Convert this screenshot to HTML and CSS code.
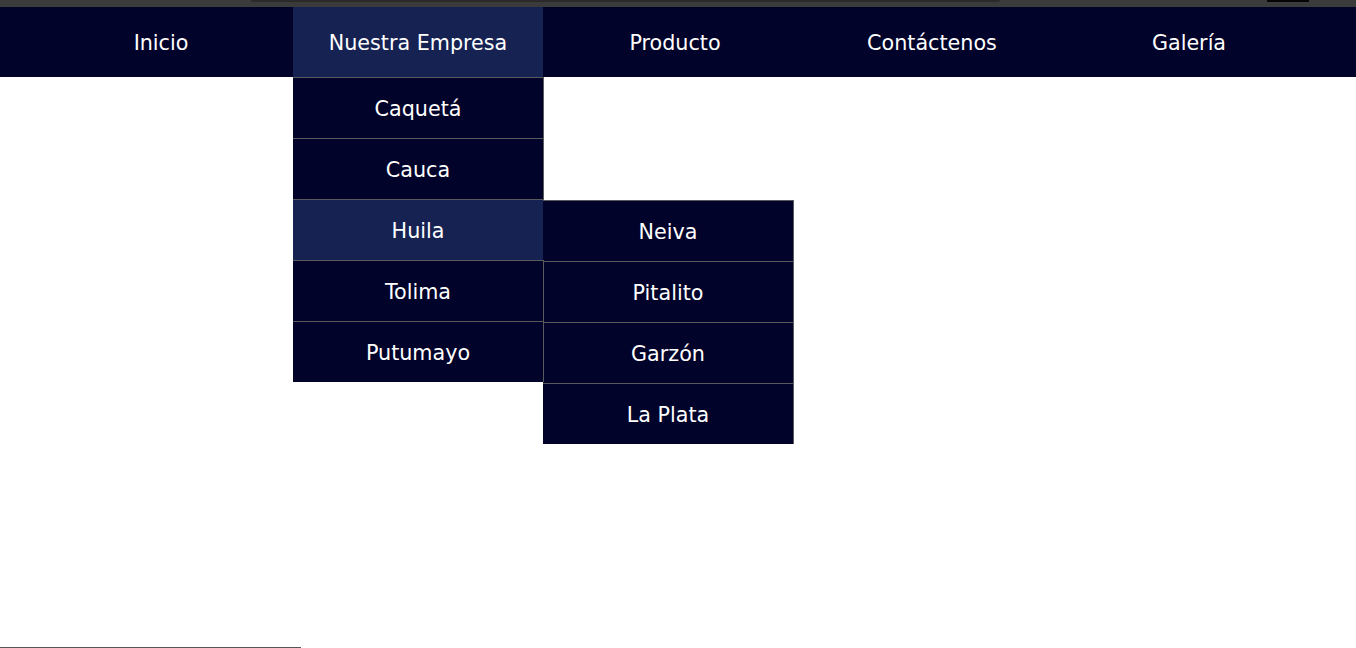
FILE: index.html
```html
<!DOCTYPE html>
<html lang="es">
<head>
    <meta charset="UTF-8">
    <meta name="viewport" content="width=device-width, initial-scale=1.0">
    <title>Menú</title>
    <link rel="stylesheet" href="styles.css">
</head>
<body>
    <div class="topbar">
        <div class="topbar-address"></div>
        <div class="topbar-tab"></div>
    </div>

    <nav class="menu">
        <ul class="menu-list">
            <li class="menu-item"><a href="#">Inicio</a></li>
            <li class="menu-item active">
                <a href="#">Nuestra Empresa</a>
                <ul class="dropdown">
                    <li class="dropdown-item"><a href="#">Caquetá</a></li>
                    <li class="dropdown-item"><a href="#">Cauca</a></li>
                    <li class="dropdown-item active">
                        <a href="#">Huila</a>
                        <ul class="submenu">
                            <li class="dropdown-item"><a href="#">Neiva</a></li>
                            <li class="dropdown-item"><a href="#">Pitalito</a></li>
                            <li class="dropdown-item"><a href="#">Garzón</a></li>
                            <li class="dropdown-item"><a href="#">La Plata</a></li>
                        </ul>
                    </li>
                    <li class="dropdown-item"><a href="#">Tolima</a></li>
                    <li class="dropdown-item"><a href="#">Putumayo</a></li>
                </ul>
            </li>
            <li class="menu-item"><a href="#">Producto</a></li>
            <li class="menu-item"><a href="#">Contáctenos</a></li>
            <li class="menu-item"><a href="#">Galería</a></li>
        </ul>
    </nav>

    <div class="bottom-line"></div>
</body>
</html>
```

FILE: styles.css
```css
* {
    margin: 0;
    padding: 0;
    box-sizing: border-box;
}

body {
    font-family: 'DejaVu Sans', Verdana, sans-serif;
    background: #ffffff;
    overflow: hidden;
}

.topbar {
    height: 7px;
    background: #3b3b3b;
    position: relative;
}

.topbar-address {
    position: absolute;
    left: 251px;
    top: 0;
    width: 749px;
    height: 2px;
    background: #2a2a2a;
    border-radius: 0 0 2px 2px;
}

.topbar-tab {
    position: absolute;
    left: 1267px;
    top: 0;
    width: 42px;
    height: 2px;
    background: #050505;
}

.menu {
    background: #02032a;
}

.menu ul {
    list-style: none;
}

.menu a {
    color: #ffffff;
    text-decoration: none;
    font-size: 20.7px;
    display: flex;
    align-items: center;
    justify-content: center;
    height: 100%;
    padding-top: 2px;
}

.menu-list {
    display: flex;
    gap: 7px;
    padding-left: 36px;
}

.menu-item {
    position: relative;
    width: 250px;
    height: 70px;
}

.menu-item.active {
    background: #162252;
}

.dropdown {
    position: absolute;
    top: 100%;
    left: 0;
    width: 251px;
    z-index: 10;
}

.dropdown-item {
    position: relative;
    height: 61px;
    background: #02032a;
    border-top: 1px solid #5a5a5a;
    border-right: 1px solid #5a5a5a;
}

.dropdown-item.active {
    background: #162252;
}

.submenu {
    position: absolute;
    top: 0;
    left: 100%;
    width: 251px;
}

.bottom-line {
    width: 301px;
    margin-top: 570px;
    border-top: 1px solid #555555;
}
```
